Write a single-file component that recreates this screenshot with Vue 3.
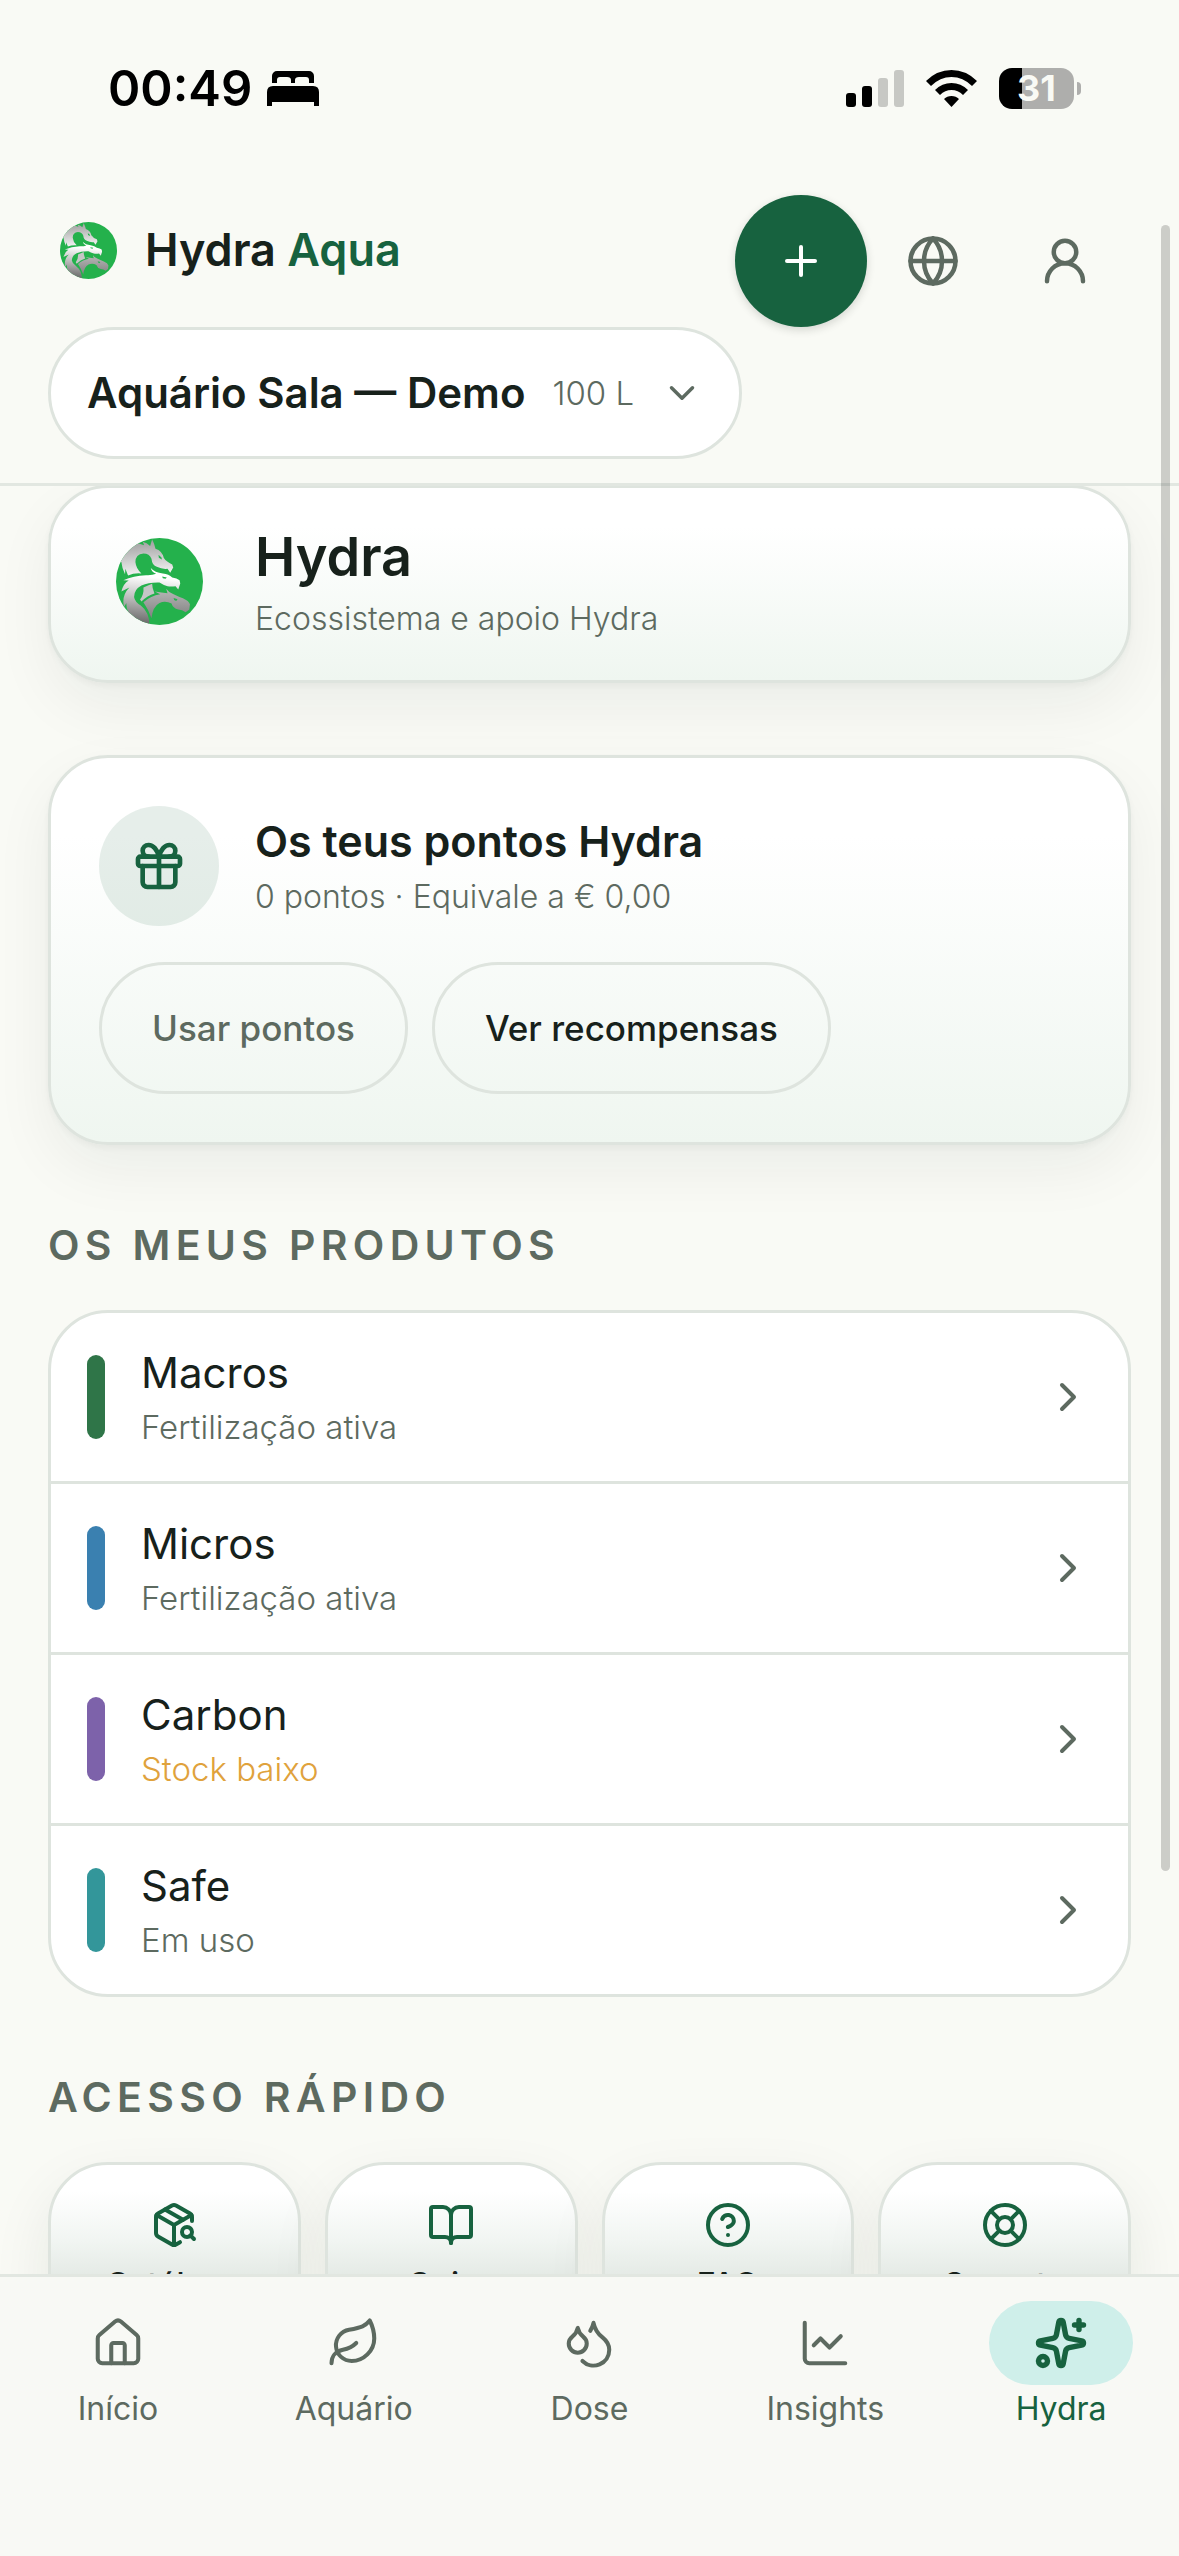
<template>
  <div class="app">

    <!-- logo partagé : défini une fois, réutilisé avec <use> -->
    <svg class="sprite" aria-hidden="true">
      <defs>
        <linearGradient id="silver-a" x1="0.4" y1="0" x2="0.5" y2="1">
          <stop offset="0" stop-color="#9c9c9c" />
          <stop offset="0.5" stop-color="#c9c9c9" />
          <stop offset="1" stop-color="#f4f4f4" />
        </linearGradient>
        <linearGradient id="silver-b" x1="0.5" y1="0" x2="0.4" y2="1">
          <stop offset="0.15" stop-color="#ffffff" />
          <stop offset="0.5" stop-color="#c4c4c4" />
          <stop offset="1" stop-color="#636363" />
        </linearGradient>
        <linearGradient id="silver-c" x1="0" y1="0" x2="0" y2="1">
          <stop offset="0" stop-color="#b8b8b8" />
          <stop offset="1" stop-color="#808080" />
        </linearGradient>
        <clipPath id="logo-clip"><circle cx="130" cy="130" r="130" /></clipPath>
      </defs>
      <symbol id="hydra-logo" viewBox="0 0 260 260">
        <g clip-path="url(#logo-clip)">
          <rect width="260" height="260" fill="#24b14c" />
          <path fill="url(#silver-a)" d="M12 70Q30 36 66 16L84 22 80 11Q92 14 102 24L108 4Q114 16 118 32 138 38 143 60 151 72 168 79L171 88 162 104 154 92Q138 94 122 86 108 82 106 62 100 46 82 46 58 48 58 72 60 92 76 106 54 104 36 112L28 92 27 108Q18 92 16 72Z" />
          <path fill="url(#silver-b)" d="M22 126Q52 112 90 111 108 112 120 107 106 102 104 90 116 104 140 106 158 108 168 118 182 120 190 126L192 136 186 154 178 144Q164 146 154 144 140 140 130 133 98 132 76 142 54 154 54 176 56 190 74 202 100 222 100 262L50 240Q30 220 31 194L24 206Q16 172 40 148L16 160Q22 136 38 127Z" />
          <path fill="#c6c6c6" d="M82 148Q96 142 108 137 108 150 115 166 94 172 76 190L72 184Q84 168 82 148Z" />
          <path fill="url(#silver-c)" d="M82 192Q104 172 132 168L116 160Q136 164 154 165L150 152Q158 164 172 168 188 176 200 180 218 188 221 198L219 214 208 222Q198 214 186 214 170 210 166 196 148 186 130 194 110 204 106 240 96 212 82 192Z" />
          <path fill="#24b14c" d="M127 50L136 58 137 64 128 59ZM138 115L152 118 148 122 140 120ZM172 179L184 183 180 188 174 185Z" />
        </g>
      </symbol>
    </svg>

    <!-- ── BARRE D'ÉTAT + EN-TÊTE ── -->
    <header class="top">
      <div class="status">
        <div class="status__left">
          <span class="status__time">00:49</span>
          <svg class="status__bed" viewBox="0 0 52 35" aria-hidden="true">
            <path d="M5 12V5a5 5 0 0 1 5-5h32a5 5 0 0 1 5 5v7h-5V9q0-3-3-3h-7q-4 0-4 3v3h-4V9q0-3-4-3h-7q-3 0-3 3v3ZM0 35V21q0-6 6-6h40q6 0 6 6v14h-5v-4H5v4Z" />
          </svg>
        </div>
        <div class="status__right">
          <svg class="status__signal" viewBox="0 0 58 37" aria-hidden="true">
            <rect x="0" y="23" width="10" height="14" rx="3" />
            <rect x="16" y="16" width="10" height="21" rx="3" />
            <rect x="32" y="8" width="10" height="29" rx="3" opacity="0.2" />
            <rect x="48" y="0" width="10" height="37" rx="3" opacity="0.2" />
          </svg>
          <svg class="status__wifi" viewBox="0 0 51 37" aria-hidden="true">
            <path d="M0 11Q11 0 25.500 0T51 11L46 16Q37 7 25.500 7T5 16ZM9 20Q16 13 25.500 13T42 20L37 25Q32 20 25.500 20T14 25ZM18 29Q21 26 25.500 26T33 29L25.500 37Z" />
          </svg>
          <div class="battery">
            <span class="battery__body">31</span>
            <span class="battery__tip"></span>
          </div>
        </div>
      </div>

      <div class="bar">
        <a class="brand" href="#">
          <svg class="brand__logo" aria-hidden="true"><use href="#hydra-logo" /></svg>
          <span class="brand__name">Hydra <em>Aqua</em></span>
        </a>
        <div class="bar__actions">
          <button class="round round--primary" type="button" aria-label="Adicionar">
            <Icon name="plus" :size="48" />
          </button>
          <button class="round" type="button" aria-label="Idioma">
            <Icon name="globe" :size="54" />
          </button>
          <button class="round" type="button" aria-label="Conta">
            <Icon name="user" :size="54" />
          </button>
        </div>
      </div>

      <label class="picker">
        <span class="picker__name">{{ tank.name }}</span>
        <span class="picker__volume">{{ tank.volume }}</span>
        <Icon name="down" :size="42" />
        <select v-model="tankId" class="picker__select" aria-label="Aquário">
          <option v-for="t in tanks" :key="t.id" :value="t.id">{{ t.name }}</option>
        </select>
      </label>
    </header>

    <!-- ── CONTENU ── -->
    <main class="content">
      <section class="card card--hero">
        <div class="card__head">
          <div class="card__badge">
            <svg class="card__logo" aria-hidden="true"><use href="#hydra-logo" /></svg>
          </div>
          <div>
            <h1 class="card__title card__title--big">Hydra</h1>
            <p class="card__sub">Ecossistema e apoio Hydra</p>
          </div>
        </div>
      </section>

      <section class="card card--points">
        <div class="card__head">
          <div class="card__badge card__badge--tint">
            <Icon name="gift" :size="56" />
          </div>
          <div>
            <h2 class="card__title">Os teus pontos Hydra</h2>
            <p class="card__sub">{{ points }} pontos · Equivale a € 0,00</p>
          </div>
        </div>
        <div class="card__actions">
          <button class="pill" type="button" :disabled="points === 0">Usar pontos</button>
          <button class="pill" type="button">Ver recompensas</button>
        </div>
      </section>

      <h2 class="heading">Os meus produtos</h2>
      <ul class="products">
        <li v-for="p in products" :key="p.name">
          <a class="product" href="#">
            <span class="product__bar" :style="{ background: p.color }"></span>
            <span class="product__text">
              <span class="product__name">{{ p.name }}</span>
              <span class="product__state" :class="{ 'product__state--low': p.low }">{{ p.state }}</span>
            </span>
            <Icon name="right" :size="48" />
          </a>
        </li>
      </ul>

      <h2 class="heading">Acesso rápido</h2>
      <div class="tiles">
        <a v-for="s in shortcuts" :key="s.label" class="tile" href="#">
          <Icon :name="s.icon" :size="48" />
          <span>{{ s.label }}</span>
        </a>
      </div>
    </main>

    <!-- ── NAVIGATION ── -->
    <nav class="tabs">
      <a
        v-for="t in tabs"
        :key="t.label"
        class="tab"
        :class="{ 'tab--active': t.label === active }"
        href="#"
        @click.prevent="active = t.label"
      >
        <span class="tab__icon"><Icon :name="t.icon" :size="54" /></span>
        <span class="tab__label">{{ t.label }}</span>
      </a>
    </nav>

    <div class="scrollbar"></div>
  </div>
</template>

<script setup>
import { ref, computed, h } from 'vue'

// tracés sur une grille 24×24
const ICONS = {
  plus: ['M5 12h14', 'M12 5v14'],
  globe: ['M2 12a10 10 0 1 0 20 0a10 10 0 1 0-20 0', 'M12 2a14.5 14.5 0 0 0 0 20 14.5 14.5 0 0 0 0-20', 'M2 12h20'],
  user: ['M7 8a5 5 0 1 0 10 0a5 5 0 1 0-10 0', 'M20 21a8 8 0 0 0-16 0'],
  down: ['m6 9 6 6 6-6'],
  right: ['m9 18 6-6-6-6'],
  gift: ['M4 8h16a1 1 0 0 1 1 1v2a1 1 0 0 1-1 1H4a1 1 0 0 1-1-1V9a1 1 0 0 1 1-1z', 'M12 8v13', 'M19 12v7a2 2 0 0 1-2 2H7a2 2 0 0 1-2-2v-7', 'M7.5 8a2.5 2.5 0 0 1 0-5A4.8 8 0 0 1 12 8a4.8 8 0 0 1 4.5-5 2.5 2.5 0 0 1 0 5'],
  catalog: ['M21 10V8a2 2 0 0 0-1-1.73l-7-4a2 2 0 0 0-2 0l-7 4A2 2 0 0 0 3 8v8a2 2 0 0 0 1 1.73l7 4a2 2 0 0 0 2 0l2-1.14', 'm7.5 4.27 9 5.15', 'M3.29 7 12 12l8.71-5', 'M12 22V12', 'M16 15.500a2.500 2.500 0 1 0 5 0a2.500 2.500 0 1 0-5 0', 'M20.27 17.27 22 19'],
  book: ['M12 7v14', 'M3 18a1 1 0 0 1-1-1V4a1 1 0 0 1 1-1h5a4 4 0 0 1 4 4 4 4 0 0 1 4-4h5a1 1 0 0 1 1 1v13a1 1 0 0 1-1 1h-6a3 3 0 0 0-3 3 3 3 0 0 0-3-3z'],
  help: ['M2 12a10 10 0 1 0 20 0a10 10 0 1 0-20 0', 'M9.09 9a3 3 0 0 1 5.83 1c0 2-3 3-3 3', 'M12 17h.01'],
  buoy: ['M2 12a10 10 0 1 0 20 0a10 10 0 1 0-20 0', 'M8 12a4 4 0 1 0 8 0a4 4 0 1 0-8 0', 'm4.93 4.93 4.24 4.24', 'm14.83 9.17 4.24-4.24', 'm14.83 14.83 4.24 4.24', 'm9.17 14.83-4.24 4.24'],
  home: ['M15 21v-8a1 1 0 0 0-1-1h-4a1 1 0 0 0-1 1v8', 'M3 10a2 2 0 0 1 .709-1.528l7-5.999a2 2 0 0 1 2.582 0l7 5.999A2 2 0 0 1 21 10v9a2 2 0 0 1-2 2H5a2 2 0 0 1-2-2z'],
  leaf: ['M11 20A7 7 0 0 1 9.8 6.1C15.500 5 17 4.480 19 2c1 2 2 4.180 2 8 0 5.500-4.780 10-10 10Z', 'M2 21c0-3 1.850-5.360 5.080-6C9.500 14.520 12 13 13 12'],
  drops: ['M7 16.3c2.2 0 4-1.83 4-4.05 0-1.16-.57-2.26-1.71-3.19S7.29 6.75 7 5.3c-.29 1.45-1.14 2.84-2.29 3.76S3 11.1 3 12.25c0 2.22 1.8 4.05 4 4.05z', 'M12.56 6.6A10.97 10.97 0 0 0 14 3.02c.5 2.5 2 4.9 4 6.5s3 3.5 3 5.5a6.98 6.98 0 0 1-11.91 4.97'],
  chart: ['M3 3v16a2 2 0 0 0 2 2h16', 'm19 9-5 5-4-4-3 3'],
  sparkles: ['M11.017 2.814a1 1 0 0 1 1.966 0l1.051 5.558a2 2 0 0 0 1.594 1.594l5.558 1.051a1 1 0 0 1 0 1.966l-5.558 1.051a2 2 0 0 0-1.594 1.594l-1.051 5.558a1 1 0 0 1-1.966 0l-1.051-5.558a2 2 0 0 0-1.594-1.594l-5.558-1.051a1 1 0 0 1 0-1.966l5.558-1.051a2 2 0 0 0 1.594-1.594z', 'M20 2v4', 'M22 4h-4', 'M2 20a2 2 0 1 0 4 0a2 2 0 1 0-4 0'],
}

const Icon = (props) => h(
  'svg',
  { class: 'icon', viewBox: '0 0 24 24', width: props.size, height: props.size, 'aria-hidden': 'true' },
  ICONS[props.name].map((d) => h('path', { d })),
)
Icon.props = ['name', 'size']

const tanks = [
  { id: 'sala', name: 'Aquário Sala — Demo', volume: '100 L' },
]
const tankId = ref('sala')
const tank = computed(() => tanks.find((t) => t.id === tankId.value))

const points = ref(0)

const products = [
  { name: 'Macros', state: 'Fertilização ativa', color: '#2f7548' },
  { name: 'Micros', state: 'Fertilização ativa', color: '#3a80b0' },
  { name: 'Carbon', state: 'Stock baixo', color: '#7d62aa', low: true },
  { name: 'Safe', state: 'Em uso', color: '#33969a' },
]

const shortcuts = [
  { icon: 'catalog', label: 'Catálogo' },
  { icon: 'book', label: 'Guias' },
  { icon: 'help', label: 'FAQ' },
  { icon: 'buoy', label: 'Suporte' },
]

const tabs = [
  { icon: 'home', label: 'Início' },
  { icon: 'leaf', label: 'Aquário' },
  { icon: 'drops', label: 'Dose' },
  { icon: 'chart', label: 'Insights' },
  { icon: 'sparkles', label: 'Hydra' },
]
const active = ref('Hydra')
</script>

<style>
body {
  margin: 0;
  background: #f9faf5;
}
</style>

<style scoped>
.app {
  --ink: #17211b;
  --muted: #5d6a60;
  --green: #17623f;
  --line: #dee4de;
  position: relative;
  display: flex;
  flex-direction: column;
  height: 100vh;
  overflow: hidden;
  background: #f9faf5;
  color: var(--ink);
  font-family: Inter, 'Liberation Sans', sans-serif;
}
.sprite {
  position: absolute;
  width: 0;
  height: 0;
}
.icon {
  display: block;
  flex: none;
  fill: none;
  stroke: currentColor;
  stroke-width: 2;
  stroke-linecap: round;
  stroke-linejoin: round;
}
a {
  color: inherit;
  text-decoration: none;
}
h1, h2, p, ul {
  margin: 0;
  padding: 0;
}
button {
  font: inherit;
  color: inherit;
  cursor: pointer;
}

/* barre d'état */
.status {
  display: flex;
  align-items: center;
  justify-content: space-between;
  height: 177px;
  padding: 0 50px 0 60px;
}
.status__left,
.status__right {
  display: flex;
  align-items: center;
}
.status__left { gap: 15px; }
.status__right { gap: 22px; }
.status__time {
  font-size: 49px;
  font-weight: 600;
  line-height: 60px;
  color: #000;
}
.status__bed { width: 52px; height: 35px; }
.status__signal { width: 58px; height: 37px; }
.status__wifi { width: 51px; height: 37px; }
.battery {
  display: flex;
  align-items: center;
  gap: 3px;
}
.battery__body {
  width: 75px;
  border-radius: 13px;
  background: linear-gradient(90deg, #000 23px, #aeaeac 23px);
  color: #f9faf5;
  font-size: 36px;
  font-weight: 700;
  line-height: 41px;
  text-align: center;
}
.battery__tip {
  width: 4px;
  height: 13px;
  border-radius: 0 6px 6px 0;
  background: #aeaeac;
}

/* en-tête */
.top {
  position: relative;
  z-index: 1;
  padding: 0 48px 24px;
  border-bottom: 3px solid #e2e7e1;
  background: #f9faf5;
}
.status + .bar { margin-top: 18px; }
.bar {
  display: flex;
  justify-content: space-between;
}
.brand {
  display: flex;
  align-items: center;
  gap: 28px;
  height: 110px;
  padding-left: 12px;
}
.brand__logo { width: 57px; height: 57px; }
.brand__name {
  font-size: 45px;
  font-weight: 600;
  line-height: 60px;
}
.brand__name em {
  font-style: normal;
  color: var(--green);
}
.bar__actions { display: flex; }
.round {
  display: flex;
  align-items: center;
  justify-content: center;
  width: 132px;
  height: 132px;
  padding: 0;
  border: 0;
  border-radius: 50%;
  background: none;
  color: var(--muted);
}
.round--primary {
  background: var(--green);
  color: #fff;
  box-shadow: 0 3px 9px rgba(23, 33, 27, 0.16);
}
.picker {
  position: relative;
  display: inline-flex;
  align-items: center;
  height: 126px;
  padding: 0 36px;
  border: 3px solid var(--line);
  border-radius: 66px;
  background: #fff;
  vertical-align: top;
  color: var(--muted);
}
.picker__name {
  margin-right: 27px;
  font-size: 42px;
  font-weight: 600;
  line-height: 60px;
  color: var(--ink);
}
.picker__volume {
  margin-right: 27px;
  font-size: 33px;
  font-weight: 300;
  line-height: 48px;
}
.picker__select {
  position: absolute;
  inset: 0;
  width: 100%;
  opacity: 0;
  cursor: pointer;
}

/* contenu */
.content {
  flex: 1;
  min-height: 0;
  padding: 0 48px;
}
.card {
  padding: 48px;
  border: 3px solid var(--line);
  border-radius: 60px;
  background: linear-gradient(#fff 20%, #eff6f0);
  box-shadow: 0 3px 6px rgba(23, 33, 27, 0.04), 0 24px 60px rgba(23, 33, 27, 0.06);
}
.card--hero {
  margin-top: -1px;
  padding: 33px 48px 36px;
}
.card--hero .card__head { align-items: flex-start; }
.card--points { margin-top: 72px; }
.card__head {
  display: flex;
  align-items: center;
  gap: 36px;
}
.card__badge {
  display: flex;
  align-items: center;
  justify-content: center;
  width: 120px;
  height: 120px;
  border-radius: 50%;
  color: var(--green);
}
.card__badge--tint { background: rgba(23, 98, 63, 0.11); }
.card__logo { width: 87px; height: 87px; }
.card__title {
  font-size: 43px;
  font-weight: 600;
  line-height: 60px;
}
.card__title--big {
  font-size: 54px;
  line-height: 72px;
}
.card__sub {
  font-size: 32px;
  font-weight: 300;
  line-height: 51px;
  color: var(--muted);
}
.card__actions {
  display: flex;
  gap: 24px;
  margin-top: 36px;
}
.pill {
  height: 132px;
  padding: 0 50px;
  border: 3px solid var(--line);
  border-radius: 66px;
  background: none;
  font-size: 35px;
  font-weight: 500;
}
.pill:disabled {
  color: var(--muted);
  cursor: default;
}

.heading {
  margin-top: 72px;
  font-size: 41px;
  font-weight: 600;
  line-height: 57px;
  letter-spacing: 0.13em;
  text-transform: uppercase;
  color: var(--muted);
}

/* produits */
.products {
  margin-top: 36px;
  border: 3px solid var(--line);
  border-radius: 60px;
  background: #fff;
  list-style: none;
}
.products li + li { border-top: 3px solid var(--line); }
.product {
  display: flex;
  align-items: center;
  gap: 36px;
  height: 168px;
  padding: 0 36px;
  color: var(--muted);
}
.product__bar {
  width: 18px;
  height: 84px;
  border-radius: 9px;
}
.product__text {
  display: flex;
  flex: 1;
  flex-direction: column;
}
.product__name {
  font-size: 42px;
  line-height: 60px;
  color: var(--ink);
}
.product__state {
  font-size: 33px;
  font-weight: 300;
  line-height: 48px;
}
.product__state--low { color: #e0a23c; }

/* accès rapide */
.tiles {
  display: grid;
  grid-template-columns: repeat(4, 1fr);
  gap: 24px;
  margin-top: 36px;
}
.tile {
  display: flex;
  flex-direction: column;
  align-items: center;
  gap: 12px;
  height: 150px;
  padding: 36px 12px;
  border: 3px solid var(--line);
  border-radius: 60px;
  background: linear-gradient(#fff 12%, #f1f5f2 34%, #e3e9e4 52%);
  box-shadow: 0 24px 60px rgba(23, 33, 27, 0.08);
  font-size: 32px;
  font-weight: 500;
  line-height: 48px;
}
.tile .icon { color: var(--green); }

/* navigation */
.tabs {
  position: relative;
  display: grid;
  grid-template-columns: repeat(5, 1fr);
  height: 255px;
  padding-top: 24px;
  border-top: 3px solid #e2e7e1;
  background: #f8f9f5;
}
.tab {
  display: flex;
  flex-direction: column;
  align-items: center;
  color: var(--muted);
}
.tab__icon {
  display: flex;
  align-items: center;
  justify-content: center;
  width: 144px;
  height: 84px;
  border-radius: 42px;
}
.tab__label {
  font-size: 32px;
  line-height: 48px;
}
.tab .icon { stroke-width: 1.8; }
.tab--active { color: var(--green); }
.tab--active .tab__icon { background: #cfefea; }
.tab--active .icon { stroke-width: 2.4; }

.scrollbar {
  position: absolute;
  z-index: 2;
  top: 225px;
  right: 9px;
  width: 9px;
  height: 1646px;
  border-radius: 5px;
  background: rgba(0, 0, 0, 0.18);
}
</style>
